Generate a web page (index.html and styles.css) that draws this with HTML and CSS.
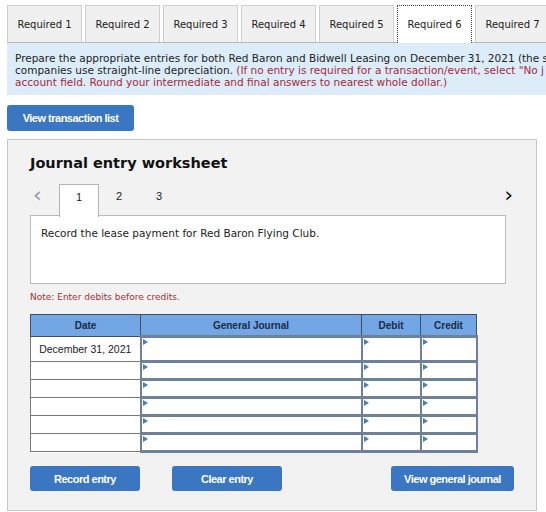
FILE: index.html
```html
<!DOCTYPE html>
<html>
<head>
<meta charset="utf-8">
<link rel="stylesheet" href="styles.css">
</head>
<body>
<div class="page">
  <div class="tabs">
    <div class="tab">Required 1</div>
    <div class="tab">Required 2</div>
    <div class="tab">Required 3</div>
    <div class="tab">Required 4</div>
    <div class="tab">Required 5</div>
    <div class="tab active">Required 6</div>
    <div class="tab">Required 7</div>
  </div>
  <div class="info">
    <div class="line">Prepare the appropriate entries for both Red Baron and Bidwell Leasing on December 31, 2021 (the s</div>
    <div class="line">companies use straight-line depreciation. <span class="red">(If no entry is required for a transaction/event, select "No j</span></div>
    <div class="line red">account field. Round your intermediate and final answers to nearest whole dollar.)</div>
  </div>
  <button class="btn btn-list">View transaction list</button>
  <div class="panel">
    <h2 class="title">Journal entry worksheet</h2>
    <div class="pager">
      <span class="arrow prev">&#8249;</span>
      <span class="pnum current">1</span>
      <span class="pnum">2</span>
      <span class="pnum">3</span>
      <span class="arrow next">&#8250;</span>
    </div>
    <div class="desc">Record the lease payment for Red Baron Flying Club.</div>
    <div class="note">Note: Enter debits before credits.</div>
    <table class="journal">
      <thead>
        <tr><th class="c-date">Date</th><th class="c-gj">General Journal</th><th class="c-dr">Debit</th><th class="c-cr">Credit</th></tr>
      </thead>
      <tbody>
        <tr class="first"><td class="date">December 31, 2021</td><td class="in"></td><td class="in"></td><td class="in"></td></tr>
        <tr><td class="date"></td><td class="in"></td><td class="in"></td><td class="in"></td></tr>
        <tr><td class="date"></td><td class="in"></td><td class="in"></td><td class="in"></td></tr>
        <tr><td class="date"></td><td class="in"></td><td class="in"></td><td class="in"></td></tr>
        <tr><td class="date"></td><td class="in"></td><td class="in"></td><td class="in"></td></tr>
        <tr><td class="date"></td><td class="in"></td><td class="in"></td><td class="in"></td></tr>
      </tbody>
    </table>
    <div class="actions">
      <button class="btn btn-record">Record entry</button>
      <button class="btn btn-clear">Clear entry</button>
      <button class="btn btn-view">View general journal</button>
    </div>
  </div>
</div>
</body>
</html>
```
FILE: styles.css
```css
html, body {
  margin: 0;
  padding: 0;
  background: #ffffff;
  overflow: hidden;
}
.page {
  width: 546px;
  height: 512px;
  overflow: hidden;
  padding: 5px 0 0 7px;
  box-sizing: border-box;
  font-family: "DejaVu Sans", Verdana, sans-serif;
  color: #222;
}
.tabs {
  display: flex;
  gap: 3px;
  height: 37px;
  position: relative;
  z-index: 2;
}
.tab {
  flex: 0 0 75px;
  box-sizing: border-box;
  height: 37px;
  background: #f0f0f0;
  border: 1px solid #cfcfcf;
  border-bottom: none;
  display: flex;
  align-items: center;
  justify-content: center;
  font-size: 10px;
  color: #222;
  white-space: nowrap;
}
.tab.active {
  background: #ffffff;
  border: 1px dotted #444;
  border-bottom: none;
  height: 38px;
}
.info {
  width: 760px;
  background: #dcedf9;
  border-top: 1px solid #b9b9b9;
  padding: 9px 8px 7px 8px;
  font-size: 10.5px;
  line-height: 12px;
  color: #1e1e1e;
}
.line {
  white-space: nowrap;
}
.red {
  color: #a62a3c;
}
.btn {
  border: none;
  background: #3a76c2;
  color: #ffffff;
  font-family: "Liberation Sans", Arial, sans-serif;
  font-weight: bold;
  font-size: 11px;
  letter-spacing: -0.5px;
  border-radius: 3px;
  padding: 0;
  display: block;
}
.btn-list {
  margin-top: 10px;
  width: 127px;
  height: 26px;
}
.panel {
  margin-top: 8px;
  width: 530px;
  height: 372px;
  box-sizing: border-box;
  background: #f2f2f2;
  border: 1px solid #c8c8c8;
  padding: 13px 22px 0 22px;
}
.title {
  margin: 0;
  font-size: 14.5px;
  font-weight: bold;
  line-height: 20px;
  color: #111;
}
.pager {
  margin-top: 11px;
  height: 32px;
  display: flex;
  align-items: stretch;
  font-family: "Liberation Sans", Arial, sans-serif;
  font-size: 11px;
  position: relative;
  z-index: 1;
}
.arrow {
  font-family: "DejaVu Sans", sans-serif;
  font-size: 22px;
  line-height: 22px;
  color: #999;
  width: 29px;
  padding-left: 3px;
  box-sizing: border-box;
}
.arrow.next {
  margin-left: auto;
  color: #111;
  width: auto;
  margin-right: 1px;
  padding-left: 0;
}
.pnum {
  width: 40px;
  box-sizing: border-box;
  text-align: center;
  padding-top: 6px;
  color: #222;
}
.pnum.current {
  background: #ffffff;
  border: 1px solid #b5b5b5;
  border-bottom: none;
  height: 33px;
}
.desc {
  margin-top: -1px;
  width: 476px;
  height: 69px;
  box-sizing: border-box;
  background: #ffffff;
  border: 1px solid #b9b9b9;
  padding: 11px 10px;
  font-size: 10.5px;
  line-height: 13px;
  color: #222;
}
.note {
  margin-top: 7px;
  font-size: 9px;
  line-height: 12px;
  color: #a3303a;
}
.journal {
  margin-top: 11px;
  border-collapse: collapse;
  font-family: "Liberation Sans", Arial, sans-serif;
  background: #ffffff;
}
.journal th {
  background: #72a6e4;
  border: 1px solid #3e4f66;
  height: 20px;
  padding: 0;
  font-size: 10px;
  font-weight: bold;
  color: #1b2c45;
}
.c-date { width: 109px; }
.c-gj { width: 220px; }
.c-dr { width: 58px; }
.c-cr { width: 55px; }
.journal td {
  padding: 0;
  height: 15px;
}
.journal tr.first td {
  height: 22px;
}
.journal td.date {
  border: 1px solid #787878;
  font-size: 10.5px;
  text-align: center;
  color: #222;
}
.journal td.in {
  position: relative;
  border-top: 3px solid #6d8199;
  border-bottom: 3px solid #6d8199;
  border-left: 2px solid #6d8199;
  border-right: 2px solid #6d8199;
}
.journal td.in::before {
  content: "";
  position: absolute;
  top: 1px;
  left: 1px;
  border-left: 5px solid #4d7db5;
  border-top: 3px solid transparent;
  border-bottom: 3px solid transparent;
}
.actions {
  margin-top: 13px;
  display: flex;
}
.btn-record, .btn-clear {
  width: 110px;
  height: 25px;
}
.btn-clear {
  margin-left: 32px;
}
.btn-view {
  margin-left: auto;
  width: 123px;
  height: 25px;
}
```
